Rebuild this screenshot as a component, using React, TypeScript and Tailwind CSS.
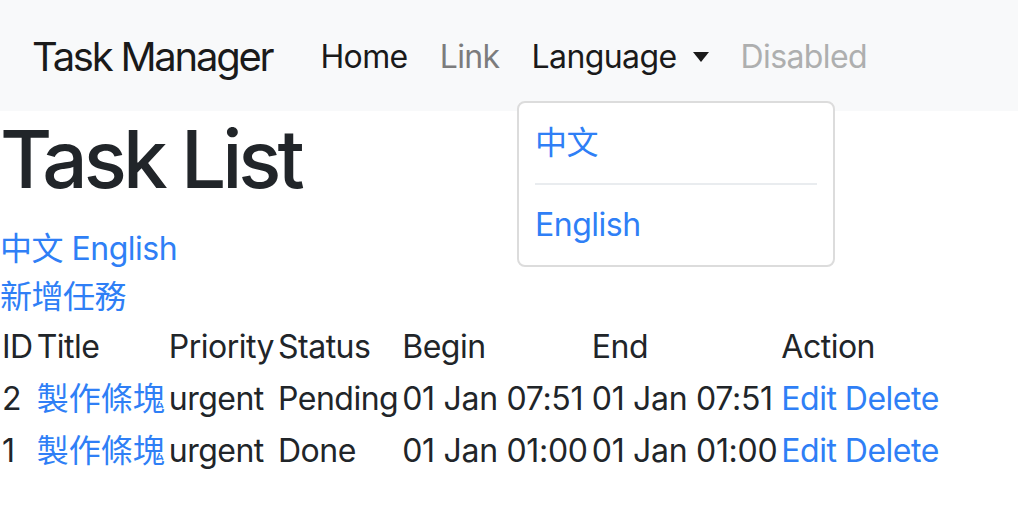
import React from "react";

const font = { fontFamily: 'Inter, "Noto Sans CJK TC", sans-serif' };

const tasks = [
    { id: 2, title: "製作條塊", priority: "urgent", status: "Pending", begin: "01 Jan 07:51", end: "01 Jan 07:51" },
    { id: 1, title: "製作條塊", priority: "urgent", status: "Done", begin: "01 Jan 01:00", end: "01 Jan 01:00" },
];

const Navbar = () => {
    return (
        <nav className="relative flex h-[111px] items-center bg-[#f8f9fa] px-[32px] pt-[3px]">
            <a className="mr-[32px] text-[40px] leading-[60px] tracking-[-0.056em] text-[#1a1a1a]">Task Manager</a>
            <ul className="flex items-center text-[32px] leading-[48px] tracking-[-0.6px]">
                <li><a className="block px-[16px] text-[#1a1a1a]">Home</a></li>
                <li><a className="block px-[16px] text-[#7c7c7d]">Link</a></li>
                <li>
                    <a className="flex items-center px-[16px] text-[#1a1a1a]">
                        Language
                        <span className="ml-[16px] inline-block h-0 w-0 border-x-[8px] border-t-[10px] border-x-transparent border-t-[#1a1a1a]" />
                    </a>
                </li>
                <li><a className="block px-[16px] text-[#aeafaf]">Disabled</a></li>
            </ul>
            <div className="absolute left-[517px] top-[101px] z-10 w-[318px] rounded-[8px] border-2 border-[#dcdcdc] bg-white py-[16px] text-[32px] leading-[48px] tracking-[-0.5px]">
                <a className="block px-[16px] text-[#2f7ff6]">中文</a>
                <div className="mx-[16px] my-[16px] h-[2px] bg-[#e9ecef]" />
                <a className="block px-[16px] text-[#2f7ff6]">English</a>
            </div>
        </nav>
    );
};

export default function App() {
    return (
        <div className="min-h-[522px] bg-white text-[#212529]" style={font}>
            <Navbar />
            <h1 className="mb-[18px] text-[80px] font-medium leading-[96px] tracking-[-0.05em]">Task List</h1>
            <div className="text-[32px] leading-[48px] tracking-[-0.5px]">
                <div>
                    <a className="text-[#2f7ff6]">中文</a> <a className="text-[#2f7ff6]">English</a>
                </div>
                <div>
                    <a className="text-[#2f7ff6]">新增任務</a>
                </div>
                <table>
                    <thead>
                        <tr>
                            {["ID", "Title", "Priority", "Status", "Begin", "End", "Action"].map((h) => (
                                <th key={h} className="p-[2px] text-left font-normal">{h}</th>
                            ))}
                        </tr>
                    </thead>
                    <tbody>
                        {tasks.map((t) => (
                            <tr key={t.id}>
                                <td className="p-[2px]">{t.id}</td>
                                <td className="p-[2px] tracking-normal"><a className="text-[#2f7ff6]">{t.title}</a></td>
                                <td className="p-[2px]">{t.priority}</td>
                                <td className="p-[2px]">{t.status}</td>
                                <td className="p-[2px] tracking-[-0.3px]">{t.begin}</td>
                                <td className="p-[2px] tracking-[-0.3px]">{t.end}</td>
                                <td className="p-[2px]">
                                    <a className="text-[#2f7ff6]">Edit</a> <a className="text-[#2f7ff6]">Delete</a>
                                </td>
                            </tr>
                        ))}
                    </tbody>
                </table>
            </div>
        </div>
    );
}
